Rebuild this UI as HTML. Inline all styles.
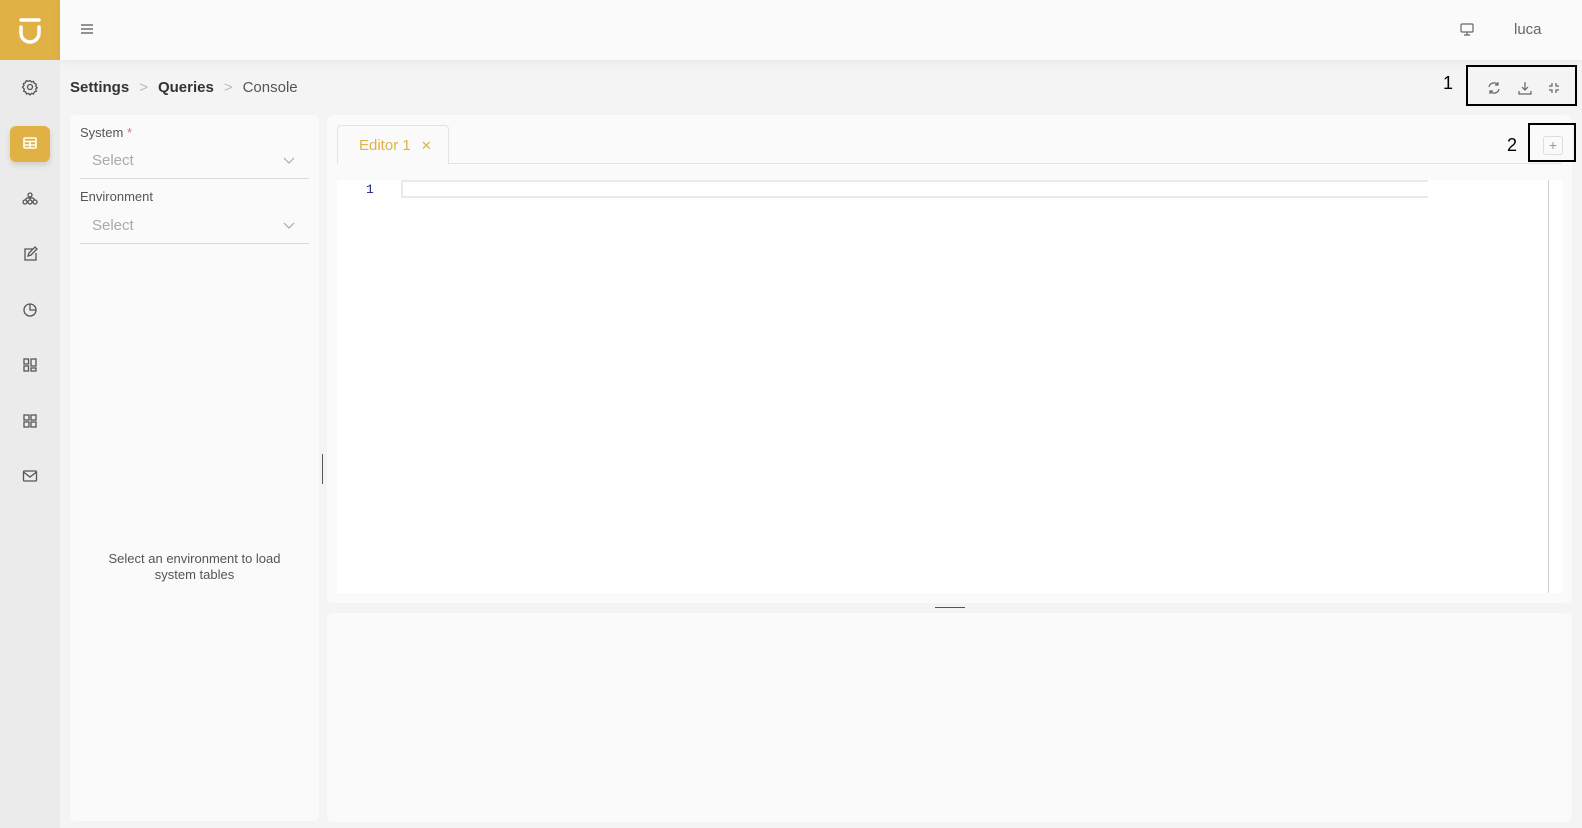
<!DOCTYPE html>
<html><head><meta charset="utf-8"><style>
*{box-sizing:border-box;margin:0;padding:0}
body{width:1582px;height:828px;overflow:hidden;background:#f4f4f5;font-family:"Liberation Sans",sans-serif;position:relative;color:#333}
.abs{position:absolute}
svg{display:block}
</style></head><body>
<div class="abs" style="left:0;top:0;width:60px;height:828px;background:#ebebeb"></div>
<div class="abs" style="left:0;top:0;width:60px;height:60px;background:#e0b245"></div>
<svg class="abs" style="left:18px;top:16px" width="24" height="30" viewBox="0 0 24 30"><path d="M3 4h18" stroke="#fff" stroke-width="3.5" stroke-linecap="round"/><path d="M3 11v6a9 9 0 0 0 18 0v-6" fill="none" stroke="#fff" stroke-width="3.5" stroke-linecap="round"/></svg>
<div class="abs" style="left:60px;top:0;width:1522px;height:60px;background:#fafafa;box-shadow:0 2px 8px rgba(0,0,0,.06)"></div>
<svg class="abs" style="left:80px;top:23px" width="14" height="12" viewBox="0 0 14 12"><path d="M1 2h12M1 6h12M1 10h12" stroke="#555" stroke-width="1.3"/></svg>
<svg class="abs" style="left:1460px;top:23px" width="14" height="13" viewBox="0 0 14 13" fill="none" stroke="#666" stroke-width="1.2"><rect x="1" y="1" width="12" height="8" rx="1"/><path d="M7 9v3M4 12h6"/></svg>
<div class="abs" style="left:1514px;top:21px;font-size:15px;color:#666">luca</div>

<div class="abs" style="left:10px;top:126px;width:40px;height:36px;background:#e0b245;border-radius:6px;box-shadow:0 3px 6px rgba(0,0,0,.12)"></div>
<svg class="abs" style="left:0;top:60px" width="60" height="440" viewBox="0 60 60 440" fill="none" stroke="#555" stroke-width="1.3">
<circle cx="30" cy="87" r="2.5"/><path d="M30 80.5l1.5 1.5 2-.6.8 2 2 .8-.6 2 1.5 1.5-1.5 1.5.6 2-2 .8-.8 2-2-.6-1.5 1.5-1.5-1.5-2 .6-.8-2-2-.8.6-2L22.5 87l1.5-1.5-.6-2 2-.8.8-2 2 .6z"/>
<g stroke="#fff" stroke-width="1.6"><rect x="24" y="138" width="12" height="10" rx="1"/><path d="M24 141.5h12M24 145h12M30 141.5v6.5"/></g>
<circle cx="30" cy="195" r="2"/><circle cx="25" cy="202" r="2"/><circle cx="30" cy="202" r="2"/><circle cx="35" cy="202" r="2"/><path d="M30 197v3M25 200l2-2h6l2 2"/>
<path d="M33 249h-8v11h11v-7M28 256l1-3 6-6 2 2-6 6z"/>
<circle cx="30" cy="310" r="6"/><path d="M30 304v6h6"/>
<rect x="24" y="359" width="4.5" height="5"/><rect x="24" y="366" width="4.5" height="5"/><rect x="31" y="359" width="5" height="7"/><rect x="31" y="368" width="5" height="3"/>
<rect x="24" y="415" width="5" height="5"/><rect x="31" y="415" width="5" height="5"/><rect x="24" y="422" width="5" height="5"/><rect x="31" y="422" width="5" height="5"/>
<rect x="23.5" y="471" width="13" height="10" rx="1"/><path d="M23.5 472l6.5 5 6.5-5"/>
</svg>

<div class="abs" style="left:70px;top:79px;font-size:15px;white-space:nowrap"><b style="color:#333">Settings</b><span style="color:#bbb;margin:0 10px">&gt;</span><b>Queries</b><span style="color:#bbb;margin:0 10px">&gt;</span><span style="color:#555">Console</span></div>

<svg class="abs" style="left:1486px;top:80px" width="80" height="16" viewBox="0 0 80 16" fill="none" stroke="#666" stroke-width="1.2">
<path d="M3 7a5 5 0 0 1 9-2M13 9a5 5 0 0 1-9 2M12 2v3h-3M4 14v-3h3"/>
<path d="M39 2v8M36 7l3 3 3-3M33 11v3h12v-3"/>
<path d="M66 3v3h-3M70 3v3h3M66 13v-3h-3M70 13v-3h3"/>
</svg>
<div class="abs" style="left:1466px;top:65px;width:111px;height:41px;border:2px solid #000"></div>
<div class="abs" style="left:1443px;top:73px;font-size:18px;color:#000">1</div>

<div class="abs" style="left:70px;top:115px;width:249px;height:706px;background:#fafafa;border-radius:6px"></div>
<div class="abs" style="left:80px;top:125px;font-size:13px;color:#555">System <span style="color:#e66">*</span></div>
<div class="abs" style="left:92px;top:152px;font-size:15px;color:#aaa">Select</div>
<svg class="abs" style="left:283px;top:157px" width="12" height="8"><path d="M1 1l5 5 5-5" fill="none" stroke="#aaa" stroke-width="1.2"/></svg>
<div class="abs" style="left:80px;top:178px;width:229px;height:1px;background:#d8dae3"></div>
<div class="abs" style="left:80px;top:189px;font-size:13px;color:#555">Environment</div>
<div class="abs" style="left:92px;top:217px;font-size:15px;color:#aaa">Select</div>
<svg class="abs" style="left:283px;top:222px" width="12" height="8"><path d="M1 1l5 5 5-5" fill="none" stroke="#aaa" stroke-width="1.2"/></svg>
<div class="abs" style="left:80px;top:243px;width:229px;height:1px;background:#d8dae3"></div>
<div class="abs" style="left:92px;top:551px;width:205px;text-align:center;font-size:13px;line-height:16px;color:#555">Select an environment to load system tables</div>
<div class="abs" style="left:322px;top:454px;width:1px;height:30px;background:#555"></div>

<div class="abs" style="left:327px;top:115px;width:1245px;height:488px;background:#fafafa;border-radius:6px"></div>
<div class="abs" style="left:337px;top:163px;width:1225px;height:1px;background:#e2e3ea"></div>
<div class="abs" style="left:337px;top:125px;width:112px;height:39px;border:1px solid #e2e3ea;border-bottom:none;border-radius:4px 4px 0 0;background:#fafafa"></div>
<div class="abs" style="left:359px;top:137px;font-size:15px;color:#e0b245">Editor 1 <span style="margin-left:6px;font-size:13px">✕</span></div>
<div class="abs" style="left:1543px;top:136px;width:20px;height:19px;border:1px solid #ddd;border-radius:3px;color:#999;font-size:14px;text-align:center;line-height:17px">+</div>
<div class="abs" style="left:1528px;top:123px;width:48px;height:39px;border:2px solid #000"></div>
<div class="abs" style="left:1507px;top:135px;font-size:18px;color:#000">2</div>
<div class="abs" style="left:337px;top:180px;width:1225px;height:413px;background:#fff"></div>
<div class="abs" style="left:1548px;top:180px;width:1px;height:413px;background:#d0d0d0"></div>
<div class="abs" style="left:401px;top:180px;width:1027px;height:18px;border:2px solid #eaeaea;border-right:none"></div>
<div class="abs" style="left:366px;top:182px;font-family:'Liberation Mono',monospace;font-size:13px;color:#1a237e">1</div>
<div class="abs" style="left:935px;top:607px;width:30px;height:1px;background:#555"></div>

<div class="abs" style="left:327px;top:613px;width:1245px;height:209px;background:#fafafa;border-radius:6px"></div>
</body></html>
